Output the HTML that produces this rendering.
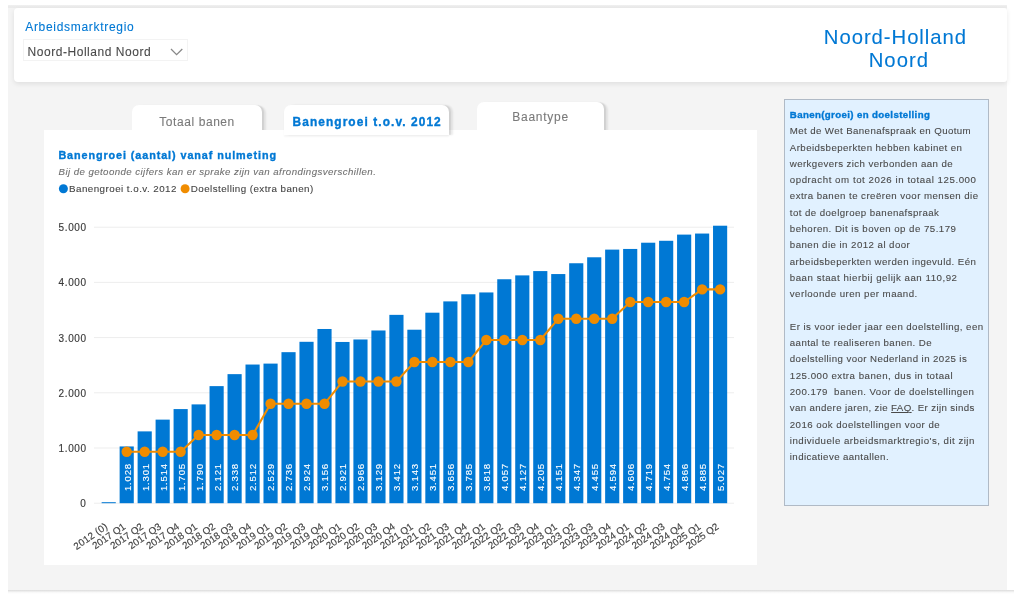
<!DOCTYPE html>
<html lang="nl">
<head>
<meta charset="utf-8">
<title>Banenafspraak - Noord-Holland Noord</title>
<style>
html,body{margin:0;padding:0;}
body{width:1024px;height:598px;overflow:hidden;background:#fff;position:relative;
font-family:"Liberation Sans",sans-serif;}
.layer{position:absolute;left:0;top:0;width:1024px;height:598px;will-change:transform;}
.t{position:absolute;white-space:pre;margin:0;-webkit-text-stroke:0.1px currentColor;}
.b{-webkit-text-stroke:0.35px currentColor;}
.canvas{position:absolute;left:7.6px;top:5px;width:999.4px;height:585px;background:#f4f4f4;
background-image:linear-gradient(#f0f0f0,#eaeaea 2px,#ececec 3.2px,#f4f4f4 3.3px);}
.bottomline{position:absolute;left:8px;top:589.6px;width:1006px;height:4.5px;background:linear-gradient(#dedede,#e6e6e6 30%,#f6f6f6 45%,#fff);}
.header{position:absolute;left:14px;top:8.2px;width:993px;height:73.8px;background:#fff;border-radius:4px 3px 3px 4px;
box-shadow:0 2px 5px rgba(0,0,0,.085);}
.select{position:absolute;left:23px;top:39px;width:163px;height:19.5px;border:1px solid #f3f3f3;background:#fff;}
.tab{position:absolute;background:#fff;border-radius:7px 7px 0 0;box-shadow:2px 0 1px rgba(0,0,0,.07),4px 1px 2px rgba(0,0,0,.08);}
.panel{position:absolute;left:44.4px;top:129.5px;width:712.6px;height:435.6px;background:#fff;}
.info{position:absolute;left:784px;top:99px;width:203px;height:405px;background:#e1f1ff;border:1px solid #b0bac6;}
svg.chart{position:absolute;left:0;top:0;font-family:"Liberation Sans",sans-serif;}
svg.ico{position:absolute;}
</style>
</head>
<body>
<div class="layer">
<div class="canvas"></div>
<div class="bottomline"></div>
<div class="header"></div>
<div class="t" style="left:25.20px;top:18.74px;font-size:12px;line-height:17px;color:#0078d4;letter-spacing:0.696px;">Arbeidsmarktregio</div>
<div class="select"></div>
<div class="t" style="left:27.60px;top:43.64px;font-size:12px;line-height:17px;color:#4a4a4a;letter-spacing:0.534px;">Noord-Holland Noord</div>
<svg class="ico" style="left:169px;top:47px" width="16" height="10" viewBox="0 0 16 10"><path d="M2 2 L7.6 7.7 L13.3 2" fill="none" stroke="#888" stroke-width="1.3"/></svg>
<div class="t" style="left:823.85px;top:22.77px;font-size:20.3px;line-height:28px;color:#0078d4;letter-spacing:0.951px;">Noord-Holland</div>
<div class="t" style="left:868.65px;top:45.97px;font-size:20.3px;line-height:28px;color:#0078d4;letter-spacing:1.052px;">Noord</div>

<div class="tab" style="left:132px;top:105px;width:129.6px;height:27px;"></div>
<div class="tab" style="left:476.8px;top:101.8px;width:127px;height:30px;"></div>
<div class="panel"></div>
<div class="tab" style="left:284.3px;top:105px;width:165px;height:29.5px;box-shadow:2px 0 1px rgba(0,0,0,.07),4px 0 2px rgba(0,0,0,.08),0 2px 2px rgba(0,0,0,.04);"></div>
<div class="t" style="left:159.30px;top:113.54px;font-size:12px;line-height:17px;color:#7a7a7a;letter-spacing:0.570px;">Totaal banen</div>
<div class="t b" style="left:292.50px;top:113.58px;font-size:11.9px;line-height:17px;color:#0078d4;letter-spacing:1.089px;font-weight:bold;">Banengroei t.o.v. 2012</div>
<div class="t" style="left:512.30px;top:108.64px;font-size:12px;line-height:17px;color:#7a7a7a;letter-spacing:0.728px;">Baantype</div>

<div class="t b" style="left:58.40px;top:147.96px;font-size:10.8px;line-height:15px;color:#0078d4;letter-spacing:0.914px;font-weight:bold;">Banengroei (aantal) vanaf nulmeting</div>
<div class="t" style="left:58.50px;top:164.54px;font-size:9.7px;line-height:14px;color:#707070;letter-spacing:0.422px;font-style:italic;">Bij de getoonde cijfers kan er sprake zijn van afrondingsverschillen.</div>
<div class="t" style="left:69.00px;top:181.90px;font-size:9.8px;line-height:14px;color:#444;letter-spacing:0.458px;">Banengroei t.o.v. 2012</div>
<div class="t" style="left:190.80px;top:181.90px;font-size:9.8px;line-height:14px;color:#444;letter-spacing:0.433px;">Doelstelling (extra banen)</div>
<svg class="chart" width="1024" height="598" viewBox="0 0 1024 598">
<line x1="94" x2="734" y1="503.20" y2="503.20" stroke="#ededed" stroke-width="1"/>
<line x1="94" x2="734" y1="448.00" y2="448.00" stroke="#ededed" stroke-width="1"/>
<line x1="94" x2="734" y1="392.80" y2="392.80" stroke="#ededed" stroke-width="1"/>
<line x1="94" x2="734" y1="337.60" y2="337.60" stroke="#ededed" stroke-width="1"/>
<line x1="94" x2="734" y1="282.40" y2="282.40" stroke="#ededed" stroke-width="1"/>
<line x1="94" x2="734" y1="227.20" y2="227.20" stroke="#ededed" stroke-width="1"/>
<text x="80.20" y="507.10" font-size="10" fill="#3a3a3a" stroke="#3a3a3a" stroke-width="0.15">0</text>
<text x="58.60" y="451.90" font-size="10" fill="#3a3a3a" stroke="#3a3a3a" stroke-width="0.15" textLength="27.4" lengthAdjust="spacing">1.000</text>
<text x="58.60" y="396.70" font-size="10" fill="#3a3a3a" stroke="#3a3a3a" stroke-width="0.15" textLength="27.4" lengthAdjust="spacing">2.000</text>
<text x="58.60" y="341.50" font-size="10" fill="#3a3a3a" stroke="#3a3a3a" stroke-width="0.15" textLength="27.4" lengthAdjust="spacing">3.000</text>
<text x="58.60" y="286.30" font-size="10" fill="#3a3a3a" stroke="#3a3a3a" stroke-width="0.15" textLength="27.4" lengthAdjust="spacing">4.000</text>
<text x="58.60" y="231.10" font-size="10" fill="#3a3a3a" stroke="#3a3a3a" stroke-width="0.15" textLength="27.4" lengthAdjust="spacing">5.000</text>
<rect x="101.64" y="502.20" width="14.15" height="1.00" fill="#0078d4"/>
<rect x="119.63" y="446.45" width="14.15" height="56.75" fill="#0078d4"/>
<rect x="137.61" y="431.38" width="14.15" height="71.82" fill="#0078d4"/>
<rect x="155.59" y="419.63" width="14.15" height="83.57" fill="#0078d4"/>
<rect x="173.57" y="409.08" width="14.15" height="94.12" fill="#0078d4"/>
<rect x="191.56" y="404.39" width="14.15" height="98.81" fill="#0078d4"/>
<rect x="209.54" y="386.12" width="14.15" height="117.08" fill="#0078d4"/>
<rect x="227.52" y="374.14" width="14.15" height="129.06" fill="#0078d4"/>
<rect x="245.50" y="364.54" width="14.15" height="138.66" fill="#0078d4"/>
<rect x="263.48" y="363.60" width="14.15" height="139.60" fill="#0078d4"/>
<rect x="281.46" y="352.17" width="14.15" height="151.03" fill="#0078d4"/>
<rect x="299.45" y="341.80" width="14.15" height="161.40" fill="#0078d4"/>
<rect x="317.43" y="328.99" width="14.15" height="174.21" fill="#0078d4"/>
<rect x="335.41" y="341.96" width="14.15" height="161.24" fill="#0078d4"/>
<rect x="353.39" y="339.48" width="14.15" height="163.72" fill="#0078d4"/>
<rect x="371.38" y="330.48" width="14.15" height="172.72" fill="#0078d4"/>
<rect x="389.36" y="314.86" width="14.15" height="188.34" fill="#0078d4"/>
<rect x="407.34" y="329.71" width="14.15" height="173.49" fill="#0078d4"/>
<rect x="425.32" y="312.70" width="14.15" height="190.50" fill="#0078d4"/>
<rect x="443.30" y="301.39" width="14.15" height="201.81" fill="#0078d4"/>
<rect x="461.29" y="294.27" width="14.15" height="208.93" fill="#0078d4"/>
<rect x="479.27" y="292.45" width="14.15" height="210.75" fill="#0078d4"/>
<rect x="497.25" y="279.25" width="14.15" height="223.95" fill="#0078d4"/>
<rect x="515.23" y="275.39" width="14.15" height="227.81" fill="#0078d4"/>
<rect x="533.21" y="271.08" width="14.15" height="232.12" fill="#0078d4"/>
<rect x="551.19" y="274.06" width="14.15" height="229.14" fill="#0078d4"/>
<rect x="569.18" y="263.25" width="14.15" height="239.95" fill="#0078d4"/>
<rect x="587.16" y="257.28" width="14.15" height="245.92" fill="#0078d4"/>
<rect x="605.14" y="249.61" width="14.15" height="253.59" fill="#0078d4"/>
<rect x="623.12" y="248.95" width="14.15" height="254.25" fill="#0078d4"/>
<rect x="641.11" y="242.71" width="14.15" height="260.49" fill="#0078d4"/>
<rect x="659.09" y="240.78" width="14.15" height="262.42" fill="#0078d4"/>
<rect x="677.07" y="234.60" width="14.15" height="268.60" fill="#0078d4"/>
<rect x="695.05" y="233.55" width="14.15" height="269.65" fill="#0078d4"/>
<rect x="713.03" y="225.71" width="14.15" height="277.49" fill="#0078d4"/>
<text transform="translate(130.60,491.0) rotate(-90)" font-size="9.6" fill="#fff" stroke="#fff" stroke-width="0.12" textLength="27.2" lengthAdjust="spacing">1.028</text>
<text transform="translate(148.58,491.0) rotate(-90)" font-size="9.6" fill="#fff" stroke="#fff" stroke-width="0.12" textLength="27.2" lengthAdjust="spacing">1.301</text>
<text transform="translate(166.57,491.0) rotate(-90)" font-size="9.6" fill="#fff" stroke="#fff" stroke-width="0.12" textLength="27.2" lengthAdjust="spacing">1.514</text>
<text transform="translate(184.55,491.0) rotate(-90)" font-size="9.6" fill="#fff" stroke="#fff" stroke-width="0.12" textLength="27.2" lengthAdjust="spacing">1.705</text>
<text transform="translate(202.53,491.0) rotate(-90)" font-size="9.6" fill="#fff" stroke="#fff" stroke-width="0.12" textLength="27.2" lengthAdjust="spacing">1.790</text>
<text transform="translate(220.51,491.0) rotate(-90)" font-size="9.6" fill="#fff" stroke="#fff" stroke-width="0.12" textLength="27.2" lengthAdjust="spacing">2.121</text>
<text transform="translate(238.49,491.0) rotate(-90)" font-size="9.6" fill="#fff" stroke="#fff" stroke-width="0.12" textLength="27.2" lengthAdjust="spacing">2.338</text>
<text transform="translate(256.48,491.0) rotate(-90)" font-size="9.6" fill="#fff" stroke="#fff" stroke-width="0.12" textLength="27.2" lengthAdjust="spacing">2.512</text>
<text transform="translate(274.46,491.0) rotate(-90)" font-size="9.6" fill="#fff" stroke="#fff" stroke-width="0.12" textLength="27.2" lengthAdjust="spacing">2.529</text>
<text transform="translate(292.44,491.0) rotate(-90)" font-size="9.6" fill="#fff" stroke="#fff" stroke-width="0.12" textLength="27.2" lengthAdjust="spacing">2.736</text>
<text transform="translate(310.42,491.0) rotate(-90)" font-size="9.6" fill="#fff" stroke="#fff" stroke-width="0.12" textLength="27.2" lengthAdjust="spacing">2.924</text>
<text transform="translate(328.40,491.0) rotate(-90)" font-size="9.6" fill="#fff" stroke="#fff" stroke-width="0.12" textLength="27.2" lengthAdjust="spacing">3.156</text>
<text transform="translate(346.39,491.0) rotate(-90)" font-size="9.6" fill="#fff" stroke="#fff" stroke-width="0.12" textLength="27.2" lengthAdjust="spacing">2.921</text>
<text transform="translate(364.37,491.0) rotate(-90)" font-size="9.6" fill="#fff" stroke="#fff" stroke-width="0.12" textLength="27.2" lengthAdjust="spacing">2.966</text>
<text transform="translate(382.35,491.0) rotate(-90)" font-size="9.6" fill="#fff" stroke="#fff" stroke-width="0.12" textLength="27.2" lengthAdjust="spacing">3.129</text>
<text transform="translate(400.33,491.0) rotate(-90)" font-size="9.6" fill="#fff" stroke="#fff" stroke-width="0.12" textLength="27.2" lengthAdjust="spacing">3.412</text>
<text transform="translate(418.31,491.0) rotate(-90)" font-size="9.6" fill="#fff" stroke="#fff" stroke-width="0.12" textLength="27.2" lengthAdjust="spacing">3.143</text>
<text transform="translate(436.30,491.0) rotate(-90)" font-size="9.6" fill="#fff" stroke="#fff" stroke-width="0.12" textLength="27.2" lengthAdjust="spacing">3.451</text>
<text transform="translate(454.28,491.0) rotate(-90)" font-size="9.6" fill="#fff" stroke="#fff" stroke-width="0.12" textLength="27.2" lengthAdjust="spacing">3.656</text>
<text transform="translate(472.26,491.0) rotate(-90)" font-size="9.6" fill="#fff" stroke="#fff" stroke-width="0.12" textLength="27.2" lengthAdjust="spacing">3.785</text>
<text transform="translate(490.24,491.0) rotate(-90)" font-size="9.6" fill="#fff" stroke="#fff" stroke-width="0.12" textLength="27.2" lengthAdjust="spacing">3.818</text>
<text transform="translate(508.22,491.0) rotate(-90)" font-size="9.6" fill="#fff" stroke="#fff" stroke-width="0.12" textLength="27.2" lengthAdjust="spacing">4.057</text>
<text transform="translate(526.21,491.0) rotate(-90)" font-size="9.6" fill="#fff" stroke="#fff" stroke-width="0.12" textLength="27.2" lengthAdjust="spacing">4.127</text>
<text transform="translate(544.19,491.0) rotate(-90)" font-size="9.6" fill="#fff" stroke="#fff" stroke-width="0.12" textLength="27.2" lengthAdjust="spacing">4.205</text>
<text transform="translate(562.17,491.0) rotate(-90)" font-size="9.6" fill="#fff" stroke="#fff" stroke-width="0.12" textLength="27.2" lengthAdjust="spacing">4.151</text>
<text transform="translate(580.15,491.0) rotate(-90)" font-size="9.6" fill="#fff" stroke="#fff" stroke-width="0.12" textLength="27.2" lengthAdjust="spacing">4.347</text>
<text transform="translate(598.13,491.0) rotate(-90)" font-size="9.6" fill="#fff" stroke="#fff" stroke-width="0.12" textLength="27.2" lengthAdjust="spacing">4.455</text>
<text transform="translate(616.12,491.0) rotate(-90)" font-size="9.6" fill="#fff" stroke="#fff" stroke-width="0.12" textLength="27.2" lengthAdjust="spacing">4.594</text>
<text transform="translate(634.10,491.0) rotate(-90)" font-size="9.6" fill="#fff" stroke="#fff" stroke-width="0.12" textLength="27.2" lengthAdjust="spacing">4.606</text>
<text transform="translate(652.08,491.0) rotate(-90)" font-size="9.6" fill="#fff" stroke="#fff" stroke-width="0.12" textLength="27.2" lengthAdjust="spacing">4.719</text>
<text transform="translate(670.06,491.0) rotate(-90)" font-size="9.6" fill="#fff" stroke="#fff" stroke-width="0.12" textLength="27.2" lengthAdjust="spacing">4.754</text>
<text transform="translate(688.04,491.0) rotate(-90)" font-size="9.6" fill="#fff" stroke="#fff" stroke-width="0.12" textLength="27.2" lengthAdjust="spacing">4.866</text>
<text transform="translate(706.03,491.0) rotate(-90)" font-size="9.6" fill="#fff" stroke="#fff" stroke-width="0.12" textLength="27.2" lengthAdjust="spacing">4.885</text>
<text transform="translate(724.01,491.0) rotate(-90)" font-size="9.6" fill="#fff" stroke="#fff" stroke-width="0.12" textLength="27.2" lengthAdjust="spacing">5.027</text>
<polyline fill="none" stroke="#f08c00" stroke-width="2.1" points="126.70,451.70 144.68,451.70 162.67,451.70 180.65,451.70 198.63,435.00 216.61,435.00 234.59,435.00 252.58,435.00 270.56,403.80 288.54,403.80 306.52,403.80 324.50,403.80 342.49,381.50 360.47,381.50 378.45,381.50 396.43,381.50 414.41,362.00 432.40,362.00 450.38,362.00 468.36,362.00 486.34,340.00 504.32,340.00 522.31,340.00 540.29,340.00 558.27,318.80 576.25,318.80 594.23,318.80 612.22,318.80 630.20,302.00 648.18,302.00 666.16,302.00 684.14,302.00 702.13,289.40 720.11,289.40"/>
<circle cx="126.70" cy="451.70" r="5.2" fill="#f08c00"/>
<circle cx="144.68" cy="451.70" r="5.2" fill="#f08c00"/>
<circle cx="162.67" cy="451.70" r="5.2" fill="#f08c00"/>
<circle cx="180.65" cy="451.70" r="5.2" fill="#f08c00"/>
<circle cx="198.63" cy="435.00" r="5.2" fill="#f08c00"/>
<circle cx="216.61" cy="435.00" r="5.2" fill="#f08c00"/>
<circle cx="234.59" cy="435.00" r="5.2" fill="#f08c00"/>
<circle cx="252.58" cy="435.00" r="5.2" fill="#f08c00"/>
<circle cx="270.56" cy="403.80" r="5.2" fill="#f08c00"/>
<circle cx="288.54" cy="403.80" r="5.2" fill="#f08c00"/>
<circle cx="306.52" cy="403.80" r="5.2" fill="#f08c00"/>
<circle cx="324.50" cy="403.80" r="5.2" fill="#f08c00"/>
<circle cx="342.49" cy="381.50" r="5.2" fill="#f08c00"/>
<circle cx="360.47" cy="381.50" r="5.2" fill="#f08c00"/>
<circle cx="378.45" cy="381.50" r="5.2" fill="#f08c00"/>
<circle cx="396.43" cy="381.50" r="5.2" fill="#f08c00"/>
<circle cx="414.41" cy="362.00" r="5.2" fill="#f08c00"/>
<circle cx="432.40" cy="362.00" r="5.2" fill="#f08c00"/>
<circle cx="450.38" cy="362.00" r="5.2" fill="#f08c00"/>
<circle cx="468.36" cy="362.00" r="5.2" fill="#f08c00"/>
<circle cx="486.34" cy="340.00" r="5.2" fill="#f08c00"/>
<circle cx="504.32" cy="340.00" r="5.2" fill="#f08c00"/>
<circle cx="522.31" cy="340.00" r="5.2" fill="#f08c00"/>
<circle cx="540.29" cy="340.00" r="5.2" fill="#f08c00"/>
<circle cx="558.27" cy="318.80" r="5.2" fill="#f08c00"/>
<circle cx="576.25" cy="318.80" r="5.2" fill="#f08c00"/>
<circle cx="594.23" cy="318.80" r="5.2" fill="#f08c00"/>
<circle cx="612.22" cy="318.80" r="5.2" fill="#f08c00"/>
<circle cx="630.20" cy="302.00" r="5.2" fill="#f08c00"/>
<circle cx="648.18" cy="302.00" r="5.2" fill="#f08c00"/>
<circle cx="666.16" cy="302.00" r="5.2" fill="#f08c00"/>
<circle cx="684.14" cy="302.00" r="5.2" fill="#f08c00"/>
<circle cx="702.13" cy="289.40" r="5.2" fill="#f08c00"/>
<circle cx="720.11" cy="289.40" r="5.2" fill="#f08c00"/>
<text transform="translate(108.12,528.0) rotate(-35)" text-anchor="end" font-size="9.8" fill="#444" stroke="#444" stroke-width="0.15" textLength="38.6" lengthAdjust="spacing">2012 (0)</text>
<text transform="translate(126.10,528.0) rotate(-35)" text-anchor="end" font-size="9.8" fill="#444" stroke="#444" stroke-width="0.15" textLength="37.6" lengthAdjust="spacing">2017 Q1</text>
<text transform="translate(144.08,528.0) rotate(-35)" text-anchor="end" font-size="9.8" fill="#444" stroke="#444" stroke-width="0.15" textLength="37.6" lengthAdjust="spacing">2017 Q2</text>
<text transform="translate(162.07,528.0) rotate(-35)" text-anchor="end" font-size="9.8" fill="#444" stroke="#444" stroke-width="0.15" textLength="37.6" lengthAdjust="spacing">2017 Q3</text>
<text transform="translate(180.05,528.0) rotate(-35)" text-anchor="end" font-size="9.8" fill="#444" stroke="#444" stroke-width="0.15" textLength="37.6" lengthAdjust="spacing">2017 Q4</text>
<text transform="translate(198.03,528.0) rotate(-35)" text-anchor="end" font-size="9.8" fill="#444" stroke="#444" stroke-width="0.15" textLength="37.6" lengthAdjust="spacing">2018 Q1</text>
<text transform="translate(216.01,528.0) rotate(-35)" text-anchor="end" font-size="9.8" fill="#444" stroke="#444" stroke-width="0.15" textLength="37.6" lengthAdjust="spacing">2018 Q2</text>
<text transform="translate(233.99,528.0) rotate(-35)" text-anchor="end" font-size="9.8" fill="#444" stroke="#444" stroke-width="0.15" textLength="37.6" lengthAdjust="spacing">2018 Q3</text>
<text transform="translate(251.98,528.0) rotate(-35)" text-anchor="end" font-size="9.8" fill="#444" stroke="#444" stroke-width="0.15" textLength="37.6" lengthAdjust="spacing">2018 Q4</text>
<text transform="translate(269.96,528.0) rotate(-35)" text-anchor="end" font-size="9.8" fill="#444" stroke="#444" stroke-width="0.15" textLength="37.6" lengthAdjust="spacing">2019 Q1</text>
<text transform="translate(287.94,528.0) rotate(-35)" text-anchor="end" font-size="9.8" fill="#444" stroke="#444" stroke-width="0.15" textLength="37.6" lengthAdjust="spacing">2019 Q2</text>
<text transform="translate(305.92,528.0) rotate(-35)" text-anchor="end" font-size="9.8" fill="#444" stroke="#444" stroke-width="0.15" textLength="37.6" lengthAdjust="spacing">2019 Q3</text>
<text transform="translate(323.90,528.0) rotate(-35)" text-anchor="end" font-size="9.8" fill="#444" stroke="#444" stroke-width="0.15" textLength="37.6" lengthAdjust="spacing">2019 Q4</text>
<text transform="translate(341.89,528.0) rotate(-35)" text-anchor="end" font-size="9.8" fill="#444" stroke="#444" stroke-width="0.15" textLength="37.6" lengthAdjust="spacing">2020 Q1</text>
<text transform="translate(359.87,528.0) rotate(-35)" text-anchor="end" font-size="9.8" fill="#444" stroke="#444" stroke-width="0.15" textLength="37.6" lengthAdjust="spacing">2020 Q2</text>
<text transform="translate(377.85,528.0) rotate(-35)" text-anchor="end" font-size="9.8" fill="#444" stroke="#444" stroke-width="0.15" textLength="37.6" lengthAdjust="spacing">2020 Q3</text>
<text transform="translate(395.83,528.0) rotate(-35)" text-anchor="end" font-size="9.8" fill="#444" stroke="#444" stroke-width="0.15" textLength="37.6" lengthAdjust="spacing">2020 Q4</text>
<text transform="translate(413.81,528.0) rotate(-35)" text-anchor="end" font-size="9.8" fill="#444" stroke="#444" stroke-width="0.15" textLength="37.6" lengthAdjust="spacing">2021 Q1</text>
<text transform="translate(431.80,528.0) rotate(-35)" text-anchor="end" font-size="9.8" fill="#444" stroke="#444" stroke-width="0.15" textLength="37.6" lengthAdjust="spacing">2021 Q2</text>
<text transform="translate(449.78,528.0) rotate(-35)" text-anchor="end" font-size="9.8" fill="#444" stroke="#444" stroke-width="0.15" textLength="37.6" lengthAdjust="spacing">2021 Q3</text>
<text transform="translate(467.76,528.0) rotate(-35)" text-anchor="end" font-size="9.8" fill="#444" stroke="#444" stroke-width="0.15" textLength="37.6" lengthAdjust="spacing">2021 Q4</text>
<text transform="translate(485.74,528.0) rotate(-35)" text-anchor="end" font-size="9.8" fill="#444" stroke="#444" stroke-width="0.15" textLength="37.6" lengthAdjust="spacing">2022 Q1</text>
<text transform="translate(503.72,528.0) rotate(-35)" text-anchor="end" font-size="9.8" fill="#444" stroke="#444" stroke-width="0.15" textLength="37.6" lengthAdjust="spacing">2022 Q2</text>
<text transform="translate(521.71,528.0) rotate(-35)" text-anchor="end" font-size="9.8" fill="#444" stroke="#444" stroke-width="0.15" textLength="37.6" lengthAdjust="spacing">2022 Q3</text>
<text transform="translate(539.69,528.0) rotate(-35)" text-anchor="end" font-size="9.8" fill="#444" stroke="#444" stroke-width="0.15" textLength="37.6" lengthAdjust="spacing">2022 Q4</text>
<text transform="translate(557.67,528.0) rotate(-35)" text-anchor="end" font-size="9.8" fill="#444" stroke="#444" stroke-width="0.15" textLength="37.6" lengthAdjust="spacing">2023 Q1</text>
<text transform="translate(575.65,528.0) rotate(-35)" text-anchor="end" font-size="9.8" fill="#444" stroke="#444" stroke-width="0.15" textLength="37.6" lengthAdjust="spacing">2023 Q2</text>
<text transform="translate(593.63,528.0) rotate(-35)" text-anchor="end" font-size="9.8" fill="#444" stroke="#444" stroke-width="0.15" textLength="37.6" lengthAdjust="spacing">2023 Q3</text>
<text transform="translate(611.62,528.0) rotate(-35)" text-anchor="end" font-size="9.8" fill="#444" stroke="#444" stroke-width="0.15" textLength="37.6" lengthAdjust="spacing">2023 Q4</text>
<text transform="translate(629.60,528.0) rotate(-35)" text-anchor="end" font-size="9.8" fill="#444" stroke="#444" stroke-width="0.15" textLength="37.6" lengthAdjust="spacing">2024 Q1</text>
<text transform="translate(647.58,528.0) rotate(-35)" text-anchor="end" font-size="9.8" fill="#444" stroke="#444" stroke-width="0.15" textLength="37.6" lengthAdjust="spacing">2024 Q2</text>
<text transform="translate(665.56,528.0) rotate(-35)" text-anchor="end" font-size="9.8" fill="#444" stroke="#444" stroke-width="0.15" textLength="37.6" lengthAdjust="spacing">2024 Q3</text>
<text transform="translate(683.54,528.0) rotate(-35)" text-anchor="end" font-size="9.8" fill="#444" stroke="#444" stroke-width="0.15" textLength="37.6" lengthAdjust="spacing">2024 Q4</text>
<text transform="translate(701.53,528.0) rotate(-35)" text-anchor="end" font-size="9.8" fill="#444" stroke="#444" stroke-width="0.15" textLength="37.6" lengthAdjust="spacing">2025 Q1</text>
<text transform="translate(719.51,528.0) rotate(-35)" text-anchor="end" font-size="9.8" fill="#444" stroke="#444" stroke-width="0.15" textLength="37.6" lengthAdjust="spacing">2025 Q2</text>
</svg>
<svg class="ico" style="left:0;top:0" width="1024" height="598"><circle cx="63.4" cy="188.8" r="4.5" fill="#0078d4"/><circle cx="185.1" cy="188.8" r="4.5" fill="#f08c00"/></svg>
<div class="info"></div>
<div class="t b" style="left:789.80px;top:107.94px;font-size:9.7px;line-height:14px;color:#0078d4;letter-spacing:0.362px;font-weight:bold;">Banen(groei) en doelstelling</div>
<div class="t" style="left:789.80px;top:124.24px;font-size:9.7px;line-height:14px;color:#4a4a4a;letter-spacing:0.395px;">Met de Wet Banenafspraak en Quotum</div>
<div class="t" style="left:789.80px;top:140.54px;font-size:9.7px;line-height:14px;color:#4a4a4a;letter-spacing:0.420px;">Arbeidsbeperkten hebben kabinet en</div>
<div class="t" style="left:789.80px;top:156.84px;font-size:9.7px;line-height:14px;color:#4a4a4a;letter-spacing:0.405px;">werkgevers zich verbonden aan de</div>
<div class="t" style="left:789.80px;top:173.14px;font-size:9.7px;line-height:14px;color:#4a4a4a;letter-spacing:0.546px;">opdracht om tot 2026 in totaal 125.000</div>
<div class="t" style="left:789.80px;top:189.44px;font-size:9.7px;line-height:14px;color:#4a4a4a;letter-spacing:0.446px;">extra banen te creëren voor mensen die</div>
<div class="t" style="left:789.80px;top:205.74px;font-size:9.7px;line-height:14px;color:#4a4a4a;letter-spacing:0.425px;">tot de doelgroep banenafspraak</div>
<div class="t" style="left:789.80px;top:222.04px;font-size:9.7px;line-height:14px;color:#4a4a4a;letter-spacing:0.464px;">behoren. Dit is boven op de 75.179</div>
<div class="t" style="left:789.80px;top:238.34px;font-size:9.7px;line-height:14px;color:#4a4a4a;letter-spacing:0.446px;">banen die in 2012 al door</div>
<div class="t" style="left:789.80px;top:254.64px;font-size:9.7px;line-height:14px;color:#4a4a4a;letter-spacing:0.427px;">arbeidsbeperkten werden ingevuld. Eén</div>
<div class="t" style="left:789.80px;top:270.94px;font-size:9.7px;line-height:14px;color:#4a4a4a;letter-spacing:0.520px;">baan staat hierbij gelijk aan 110,92</div>
<div class="t" style="left:789.80px;top:287.24px;font-size:9.7px;line-height:14px;color:#4a4a4a;letter-spacing:0.463px;">verloonde uren per maand.</div>
<div class="t" style="left:789.80px;top:319.84px;font-size:9.7px;line-height:14px;color:#4a4a4a;letter-spacing:0.422px;">Er is voor ieder jaar een doelstelling, een</div>
<div class="t" style="left:789.80px;top:336.14px;font-size:9.7px;line-height:14px;color:#4a4a4a;letter-spacing:0.412px;">aantal te realiseren banen. De</div>
<div class="t" style="left:789.80px;top:352.44px;font-size:9.7px;line-height:14px;color:#4a4a4a;letter-spacing:0.417px;">doelstelling voor Nederland in 2025 is</div>
<div class="t" style="left:789.80px;top:368.74px;font-size:9.7px;line-height:14px;color:#4a4a4a;letter-spacing:0.494px;">125.000 extra banen, dus in totaal</div>
<div class="t" style="left:789.80px;top:385.04px;font-size:9.7px;line-height:14px;color:#4a4a4a;letter-spacing:0.433px;">200.179  banen. Voor de doelstellingen</div>
<div class="t" style="left:789.80px;top:401.34px;font-size:9.7px;line-height:14px;color:#4a4a4a;letter-spacing:0.370px;">van andere jaren, zie <u>FAQ</u>. Er zijn sinds</div>
<div class="t" style="left:789.80px;top:417.64px;font-size:9.7px;line-height:14px;color:#4a4a4a;letter-spacing:0.434px;">2016 ook doelstellingen voor de</div>
<div class="t" style="left:789.80px;top:433.94px;font-size:9.7px;line-height:14px;color:#4a4a4a;letter-spacing:0.476px;">individuele arbeidsmarktregio's, dit zijn</div>
<div class="t" style="left:789.80px;top:450.24px;font-size:9.7px;line-height:14px;color:#4a4a4a;letter-spacing:0.395px;">indicatieve aantallen.</div>
</div>
</body>
</html>
